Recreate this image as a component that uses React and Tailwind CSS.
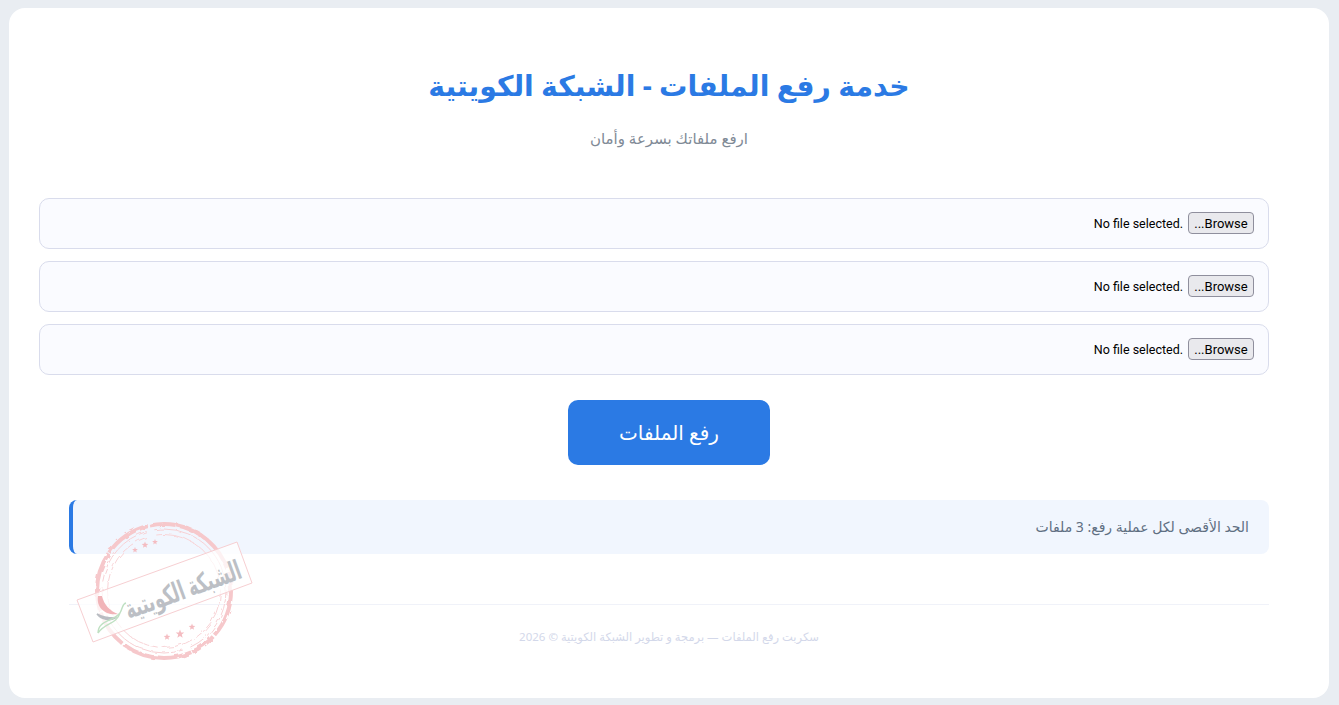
const arabic = { fontFamily: '"Noto Sans", "DejaVu Sans", sans-serif' };

function Star({ x, y, r }) {
  const pts = [];
  for (let i = 0; i < 10; i++) {
    const a = -Math.PI / 2 + (i * Math.PI) / 5;
    const q = i % 2 ? r * 0.42 : r;
    pts.push(`${(x + q * Math.cos(a)).toFixed(2)},${(y + q * Math.sin(a)).toFixed(2)}`);
  }
  return <polygon points={pts.join(" ")} />;
}

function Stamp() {
  return (
    <svg className="absolute left-[75px] top-[518px] pointer-events-none overflow-visible" width="180" height="145" viewBox="0 0 180 145" fill="none">
      <defs>
        <filter id="rough" x="-10%" y="-10%" width="120%" height="120%">
          <feTurbulence type="fractalNoise" baseFrequency="0.12" numOctaves="2" seed="4" />
          <feDisplacementMap in="SourceGraphic" scale="3.5" />
        </filter>
      </defs>
      <g filter="url(#rough)">
        <circle cx="89" cy="73" r="67" stroke="#f6c8cb" strokeWidth="4" strokeDasharray="48 2 26 1 70 3 38 2 60 1" />
        <circle cx="89" cy="73" r="62" stroke="#f7d0d3" strokeWidth="1" strokeDasharray="70 8 120 6" />
        <circle cx="89" cy="73" r="56.5" stroke="#f8d3d6" strokeWidth="1" strokeDasharray="90 5 40 3 110 10" />
      </g>
      <g fill="#f4bcc1">
        <Star x={60} y={32} r={3} />
        <Star x={70} y={27} r={3.5} />
        <Star x={80} y={24} r={3} />
        <Star x={92} y={119} r={3.5} />
        <Star x={105} y={116} r={4.5} />
        <Star x={117} y={109} r={3.5} />
      </g>
      <polygon points="2,82 162,24 177,65 18,124" fill="#ffffff" fillOpacity="0.75" stroke="#f7cfd2" strokeWidth="1" />
      <text x="108" y="81" textAnchor="middle" transform="rotate(-20 108 72)" fill="#bcbfc5" fontSize="27" fontWeight="700" textLength="122" lengthAdjust="spacingAndGlyphs" style={arabic} direction="rtl">
        الشبكة الكويتية
      </text>
      <path d="M23 78 C21 90 31 98 43 96 C35 93 29 87 27 78 Z" fill="#f1b4b8" />
      <path d="M22 96 C27 102 35 103 40 100 C34 100 27 99 22 96 Z" fill="#b9bcc2" stroke="#b9bcc2" strokeWidth="1.5" />
      <path d="M23 115 C23 102 38 104 45 95 C48 90 47 86 51 85 M45 95 C41 107 31 104 23 115" stroke="#bfe0c2" strokeWidth="1.4" />
    </svg>
  );
}

function FileRow() {
  return (
    <div className="w-[1230px] h-[51px] bg-[#fafbff] border border-[#d9dcec] rounded-[10px] flex items-center gap-[5px] pr-[14px] pb-px">
      <button className="h-[22px] w-[66px] border border-[#8f8f9d] rounded-[4px] bg-[#e9e9ed] text-[13px] text-black flex items-center justify-center leading-none" style={{ fontFamily: 'Roboto, sans-serif' }}>
        Browse...
      </button>
      <span dir="ltr" className="text-[12.5px] text-black leading-none pt-0.5" style={{ fontFamily: 'Roboto, sans-serif' }}>No file selected.</span>
    </div>
  );
}

export default function App() {
  return (
    <div dir="rtl" className="relative h-[705px] bg-[#e9edf2] overflow-hidden pt-2" style={arabic}>
      <div className="mr-[10px] w-[1320px] h-[690px] bg-white rounded-2xl flex flex-col items-center">
        <div className="w-[1200px] flex flex-col">
          <h1 className="mt-[55px] h-[44px] leading-[44px] text-[28.3px] font-bold text-[#2b7ae4] text-center">
            خدمة رفع الملفات - الشبكة الكويتية
          </h1>
          <p className="mt-[19px] mb-px h-[24px] leading-[24px] text-[15px] text-[#7f8a96] text-center">ارفع ملفاتك بسرعة وأمان</p>
          <div className="mt-[47px] flex flex-col gap-3">
            <FileRow />
            <FileRow />
            <FileRow />
          </div>
          <button className="mt-[25px] self-center w-[202px] h-[65px] rounded-[10px] bg-[#2b7ae4] text-white text-[20px] pt-px">رفع الملفات</button>
          <div className="mt-[35px] h-[54px] flex items-center pr-5 pb-0.5 bg-[#f1f6fe] border-l-[4px] border-[#2b7ae4] rounded-lg text-[14px] text-[#5f6f82]">
            الحد الأقصى لكل عملية رفع: 3 ملفات
          </div>
          <div className="mt-[50px] border-t border-[#f0f2f9] pt-[22px] text-center text-[11.5px] leading-5 text-[#d3d8ea]">
            سكربت رفع الملفات — برمجة و تطوير الشبكة الكويتية © 2026
          </div>
        </div>
      </div>
      <Stamp />
    </div>
  );
}
